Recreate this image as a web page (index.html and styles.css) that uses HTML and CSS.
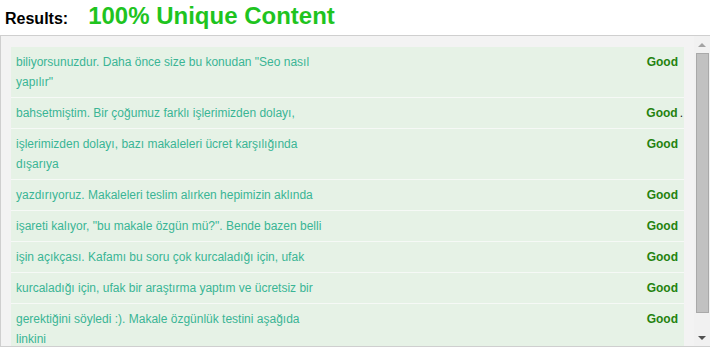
FILE: index.html
```html
<!DOCTYPE html>
<html lang="tr">
<head>
  <meta charset="UTF-8" />
  <title>Seo Checker Results</title>
  <link rel="stylesheet" href="styles.css">
</head>
<body>

  <div class="results-head">
    <span class="label">Results:</span>
    <span class="score">100% Unique Content</span>
  </div>

  <div class="results-box">
    <div class="result-list">
      <div class="row"><div class="text">biliyorsunuzdur. Daha önce size bu konudan "Seo nasıl yapılır"</div><div class="status">Good</div></div>
      <div class="row"><div class="text">bahsetmiştim. Bir çoğumuz farklı işlerimizden dolayı,</div><div class="status">Good<span class="dot">.</span></div></div>
      <div class="row"><div class="text">işlerimizden dolayı, bazı makaleleri ücret karşılığında dışarıya</div><div class="status">Good</div></div>
      <div class="row"><div class="text">yazdırıyoruz. Makaleleri teslim alırken hepimizin aklında</div><div class="status">Good</div></div>
      <div class="row"><div class="text">işareti kalıyor, "bu makale özgün mü?". Bende bazen belli</div><div class="status">Good</div></div>
      <div class="row"><div class="text">işin açıkçası. Kafamı bu soru çok kurcaladığı için, ufak</div><div class="status">Good</div></div>
      <div class="row"><div class="text">kurcaladığı için, ufak bir araştırma yaptım ve ücretsiz bir</div><div class="status">Good</div></div>
      <div class="row"><div class="text">gerektiğini söyledi :). Makale özgünlük testini aşağıda linkini</div><div class="status">Good</div></div>
    </div>

    <!-- fake scrollbar -->
    <div class="scrollbar">
      <div class="arrow"><span class="tri-up"></span></div>
      <div class="thumb"></div>
      <div class="track"></div>
      <div class="arrow"><span class="tri-down"></span></div>
    </div>
  </div>

</body>
</html>
```

FILE: styles.css
```css
* {
  box-sizing: border-box;
}

html, body {
  margin: 0;
  padding: 0;
  background: #fff;
  font-family: 'Liberation Sans', Arial, sans-serif;
  overflow: hidden;
}

.results-head {
  height: 35px;
  padding: 1px 0 0 5px;
  display: flex;
  align-items: baseline;
  gap: 20px;
  line-height: 30px;
}

.results-head .label {
  font-size: 16px;
  font-weight: bold;
  color: #000;
}

.results-head .score {
  font-size: 24px;
  font-weight: bold;
  color: #1fc41f;
}

.results-box {
  display: flex;
  height: 312px;
  border: 1px solid #cfcfcf;
  border-right: none;
  background: #f3f3f3;
}

.result-list {
  flex: 1;
  padding: 11px 10px 0 10px;
  overflow: hidden;
}

.row {
  display: flex;
  align-items: flex-start;
  background: #e6f2e6;
  border-bottom: 1px solid #f6f9f6;
  padding: 5px 6px 5px 5px;
  font-size: 12px;
  line-height: 20px;
}

.row .text {
  width: 310px;
  color: #3ab595;
}

.row .status {
  margin-left: auto;
  font-weight: bold;
  color: #24820f;
}

.row .dot {
  color: #222;
  font-weight: normal;
  margin: 0 -5px 0 2px;
}

.scrollbar {
  width: 16px;
  display: flex;
  flex-direction: column;
  background: #f1f1f1;
}

.scrollbar .arrow {
  height: 17px;
  display: flex;
  align-items: center;
  justify-content: center;
}

.tri-up {
  width: 0;
  height: 0;
  border-left: 4px solid transparent;
  border-right: 4px solid transparent;
  border-bottom: 4px solid #a3a3a3;
}

.tri-down {
  width: 0;
  height: 0;
  border-left: 4px solid transparent;
  border-right: 4px solid transparent;
  border-top: 4px solid #505050;
}

.scrollbar .thumb {
  height: 260px;
  margin: 0 0 0 2px;
  width: 13px;
  background: #c1c1c1;
  border: 1px solid #a9a9a9;
}

.scrollbar .track {
  flex: 1;
}
```
